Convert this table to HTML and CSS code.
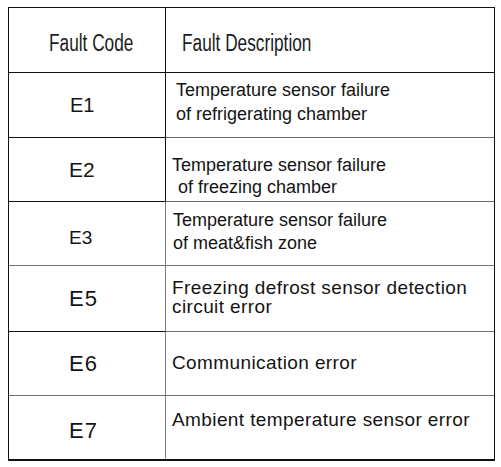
FILE: index.html
```html
<!DOCTYPE html>
<html>
<head>
<meta charset="utf-8">
<link rel="stylesheet" href="styles.css">
</head>
<body>
<div class="table">
  <div class="cell code head dark"><span class="narrow">Fault Code</span></div>
  <div class="cell desc head dark"><span class="narrow">Fault Description</span></div>

  <div class="cell code c1 dark">E1</div>
  <div class="cell desc d1 grayb">Temperature sensor failure<br>of refrigerating chamber</div>

  <div class="cell code c2 dark">E2</div>
  <div class="cell desc d2 grayb">Temperature sensor failure<br><span class="indent">of freezing chamber</span></div>

  <div class="cell code c3 gray">E3</div>
  <div class="cell desc d3 gray">Temperature sensor failure<br>of meat&amp;fish zone</div>

  <div class="cell code c5 darkb">E5</div>
  <div class="cell desc d5 gray wide">Freezing defrost sensor detection<br>circuit error</div>

  <div class="cell code c6 gray">E6</div>
  <div class="cell desc d6 gray wide">Communication error</div>

  <div class="cell code c7 last">E7</div>
  <div class="cell desc d7 last wide">Ambient temperature sensor error</div>
</div>
</body>
</html>
```

FILE: styles.css
```css
html, body {
  margin: 0;
  padding: 0;
  background: #ffffff;
}

body {
  font-family: "Liberation Sans", Arial, sans-serif;
  color: #141414;
}

.table {
  box-sizing: border-box;
  margin: 7px 0 0 8px;
  width: 487px;
  border: 1px solid #111;
  border-bottom: 2px solid #111;
  display: grid;
  grid-template-columns: 157px 1fr;
  grid-template-rows: 65px 65px 64px 64px 66px 64px 63px;
}

.cell {
  box-sizing: border-box;
  border-bottom: 1px solid #111;
}

.code {
  border-right: 1px solid #111;
  display: flex;
  align-items: center;
  padding-left: 61px;
  font-size: 21px;
  line-height: 21px;
}

.desc {
  font-size: 18px;
  line-height: 24px;
  padding-left: 10px;
}

.narrow {
  display: inline-block;
  font-family: "Liberation Sans", Arial, sans-serif;
  font-size: 23px;
  line-height: 24px;
  color: #1c1c1c;
  white-space: nowrap;
  transform: scaleX(0.75);
  transform-origin: left center;
}

.code.head {
  display: block;
  padding: 23px 0 0 40px;
}

.desc.head {
  padding: 23px 0 0 16px;
}

.dark { border-color: #111; }
.gray { border-color: #707070; }
.grayb { border-bottom-color: #666; }
.darkb { border-right-color: #808080; border-bottom-color: #111; }
.last { border-bottom: none; }
.code.gray, .code.last { border-right-color: #808080; }

.c1 { font-size: 20px; }
.c2 { padding-left: 60px; }
.c3 { padding-left: 60px; padding-top: 7px; font-size: 19px; }
.c5, .c6, .c7 { padding-left: 60px; font-size: 22px; letter-spacing: 1px; }
.c7 { padding-top: 5px; }

.d1 { padding-top: 5px; }
.d2 { padding-top: 16px; padding-left: 6px; line-height: 22px; }
.d3 { padding-top: 7px; padding-left: 7px; line-height: 23px; }

.indent { margin-left: 6px; }

.wide {
  font-size: 19px;
  letter-spacing: 0.4px;
  line-height: 19px;
  padding-left: 6px;
}
.d5 { padding-top: 12px; }
.d6 { padding-top: 21px; }
.d7 { padding-top: 14px; }
```
